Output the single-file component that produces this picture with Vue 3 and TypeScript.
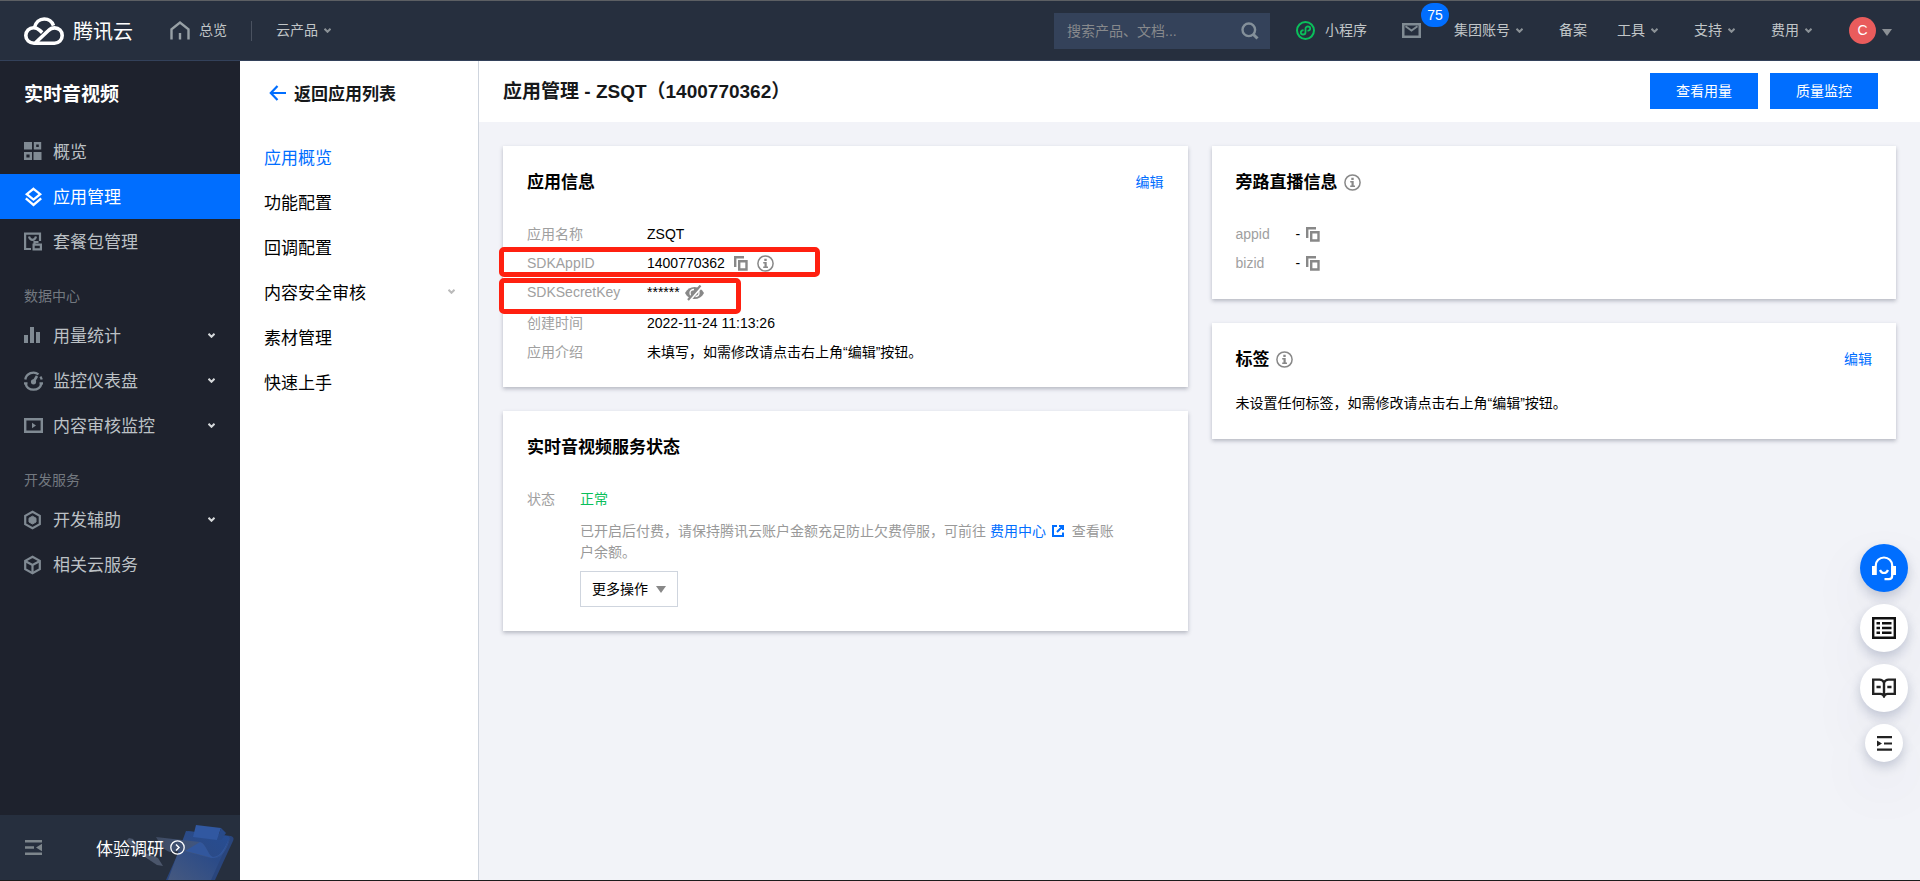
<script setup lang="ts">
import { ref } from 'vue'

interface SideItem {
  label: string
  icon: string
  active?: boolean
  expandable?: boolean
}
interface SideSection {
  title?: string
  items: SideItem[]
}

const keyword = ref<string>('')

const accountMenus: { label: string; arrow: boolean }[] = [
  { label: '集团账号', arrow: true },
  { label: '备案', arrow: false },
  { label: '工具', arrow: true },
  { label: '支持', arrow: true },
  { label: '费用', arrow: true },
]

const sections: SideSection[] = [
  {
    items: [
      { label: '概览', icon: 'grid' },
      { label: '应用管理', icon: 'layers', active: true },
      { label: '套餐包管理', icon: 'package' },
    ],
  },
  {
    title: '数据中心',
    items: [
      { label: '用量统计', icon: 'bars', expandable: true },
      { label: '监控仪表盘', icon: 'gauge', expandable: true },
      { label: '内容审核监控', icon: 'play', expandable: true },
    ],
  },
  {
    title: '开发服务',
    items: [
      { label: '开发辅助', icon: 'hexagon', expandable: true },
      { label: '相关云服务', icon: 'cube' },
    ],
  },
]

const subItems: { label: string; active?: boolean; expandable?: boolean }[] = [
  { label: '应用概览', active: true },
  { label: '功能配置' },
  { label: '回调配置' },
  { label: '内容安全审核', expandable: true },
  { label: '素材管理' },
  { label: '快速上手' },
]
</script>

<template>
  <div class="app">
    <header class="topbar">
      <a class="brand" href="#">
        <svg width="40" height="28" viewBox="0 0 40 28" fill="none" stroke="#fff" stroke-width="3.6" stroke-linejoin="round">
          <path d="M10.5 10.6C11.6 5.6 15.4 2 20.2 2c4.300 0 7.800 2.600 9.300 6.600" />
          <path d="M10 26.200c-4.600 0-8.200-3.300-8.200-7.600 0-4.400 3.400-7.800 7.700-7.800 2.600 0 4.400.9 6.300 2.600l2.400 2.200" />
          <path d="M10 26.200h20.500c4.300 0 7.700-3.200 7.700-7.700 0-4.300-3.300-7.600-7.500-7.600-2.600 0-4.600 1-6.500 2.900L11.500 25.800" />
        </svg>
        <span class="brand-name">腾讯云</span>
      </a>
      <a class="top-link home" href="#">
        <svg width="20" height="19" viewBox="0 0 20 19" fill="none" stroke="#97a0a5" stroke-width="2.4">
          <path d="M1.500 18.500V8.400L10 1.600l8.500 6.800v10.100M10 18.500v-6.500" />
        </svg>
        <span>总览</span>
      </a>
      <span class="divider"></span>
      <a class="top-link" href="#">
        <span>云产品</span>
        <svg class="chev" width="7" height="5" viewBox="0 0 7 5"><path d="M.5.8l3 3 3-3" /></svg>
      </a>

      <form class="search" role="search" @submit.prevent>
        <input v-model="keyword" type="text" aria-label="搜索产品、文档" placeholder="搜索产品、文档..." />
        <button type="submit" aria-label="搜索">
          <svg width="18" height="18" viewBox="0 0 18 18" fill="none" stroke="#84909a" stroke-width="2.400">
            <circle cx="7.800" cy="7.800" r="6.300" /><path d="M12.200 12.200l4.300 4.300" stroke-width="3" />
          </svg>
        </button>
      </form>
      <a class="top-link mini" href="#">
        <svg width="19" height="19" viewBox="0 0 19 19" fill="none" stroke="#0abf5b">
          <circle cx="9.500" cy="9.500" r="8.500" stroke-width="2" />
          <path d="M7.600 9.200C5.800 9.400 4.800 10.300 4.800 11.500c0 1.200 1 2 2.200 2 1.500 0 2.500-.9 2.500-2.300V7.800c0-1.400 1-2.300 2.400-2.300 1.300 0 2.300.8 2.300 2 0 1.200-1 2.100-2.700 2.300" stroke-width="1.800" />
        </svg>
        <span>小程序</span>
      </a>
      <a class="mail" href="#" aria-label="消息">
        <svg width="19" height="15" viewBox="0 0 19 15" fill="none" stroke="#808b93" stroke-width="2.600">
          <rect x="1.200" y="1.200" width="16.600" height="12.600" /><path d="M3.500 3.300l6 4.200 6-4.200" stroke-width="2" />
        </svg>
        <span class="badge">75</span>
      </a>
      <nav class="menus" aria-label="账号菜单">
        <a v-for="m in accountMenus" :key="m.label" class="top-link" :class="{ plain: !m.arrow }" href="#">
          <span>{{ m.label }}</span>
          <svg v-if="m.arrow" class="chev" width="7" height="5" viewBox="0 0 7 5"><path d="M.5.8l3 3 3-3" /></svg>
        </a>
      </nav>
      <button class="user" type="button">
        <span class="avatar">C</span>
        <svg class="user-caret" width="10" height="7" viewBox="0 0 10 7" fill="#8b9095"><path d="M0 0h10L5 7z" /></svg>
      </button>
    </header>

    <div class="body">
      <aside class="sidebar">
        <h2 class="side-title">实时音视频</h2>
        <nav aria-label="产品导航">
          <template v-for="(s, i) in sections" :key="i">
            <div v-if="s.title" class="side-label">{{ s.title }}</div>
            <a v-for="it in s.items" :key="it.label" class="side-item" :class="{ active: it.active }" href="#">
              <svg v-if="it.icon === 'grid'" width="19" height="19" viewBox="0 0 19 19" fill="none" stroke="#808a93" stroke-width="2.400">
                <path d="M0 0h8v7.500H0zM9.500 10h8v8h-8z" fill="#808a93" stroke="none" />
                <path d="M11 1.200h5v5h-5zM1.200 11.200h5.600v5.600H1.200z" />
              </svg>
              <svg v-else-if="it.icon === 'layers'" width="19" height="20" viewBox="0 0 19 20" fill="none" stroke="#fff" stroke-width="2.300">
                <path d="M9.500 1.800l6.700 5.400-6.700 5.400-6.700-5.400z" /><path d="M1.800 11.400l7.700 6.500 7.700-6.500" />
              </svg>
              <svg v-else-if="it.icon === 'package'" width="19" height="19" viewBox="0 0 19 19" fill="none" stroke="#808a93" stroke-width="2.200">
                <path d="M16 9V1.600H1.100v15.400H7" /><path d="M5 4.500c.5 2.200 1.800 3.300 3.500 3.300S11.500 6.700 12 4.500" /><path d="M9.600 12.600h7.300v4.800H9.600zM10.500 12v-2h4" />
              </svg>
              <svg v-else-if="it.icon === 'bars'" width="19" height="18" viewBox="0 0 19 18" fill="#808a93">
                <path d="M0 8h4v8H0zM6 0h4v16H6zM12 5h4v11h-4z" />
              </svg>
              <svg v-else-if="it.icon === 'gauge'" width="19" height="20" viewBox="0 0 19 20" fill="none" stroke="#808a93" stroke-width="2.300">
                <path d="M1.300 8.500A8.300 8.300 0 0 1 14.500 3.300M16.400 5.600a8.300 8.300 0 0 1 1.300 3M1.500 12.600a8.300 8.300 0 0 0 16 0M0 12.300h3.500M15.500 12.300H19" />
                <circle cx="9.500" cy="10.800" r="2.600" fill="#808a93" stroke="none" /><path d="M9.700 10.500L13 5" stroke-width="2.600" />
              </svg>
              <svg v-else-if="it.icon === 'play'" width="19" height="15" viewBox="0 0 19 15" fill="none" stroke="#808a93" stroke-width="2.400">
                <path d="M1.200 1.200h16.600v12.600H1.200z" /><path d="M8 4.800l4 2.700-4 2.700z" fill="#808a93" stroke="none" />
              </svg>
              <svg v-else-if="it.icon === 'hexagon'" width="19" height="20" viewBox="0 0 19 20" fill="none" stroke="#808a93" stroke-width="2.200">
                <path d="M8.500 1.800l7.300 4.100v8.200l-7.300 4.100-7.300-4.100V5.900z" /><path d="M8.500 6.200l3.500 2v3.800l-3.500 2-3.500-2V8.200z" fill="#808a93" stroke-width="1" />
              </svg>
              <svg v-else width="19" height="20" viewBox="0 0 19 20" fill="none" stroke="#808a93" stroke-width="2.200">
                <path d="M8.500 1.800l7.300 4.100v8.200l-7.300 4.100-7.300-4.100V5.900z" /><path d="M1.500 6.200l7 3.800 7-3.800M8.500 10v8" />
              </svg>
              <span class="grow">{{ it.label }}</span>
              <svg v-if="it.expandable" class="side-chev" width="7" height="5" viewBox="0 0 7 5"><path d="M.5.8l3 3 3-3" /></svg>
            </a>
          </template>
        </nav>
        <div class="side-foot">
          <button class="collapse" type="button" aria-label="收起导航">
            <svg width="17" height="15" viewBox="0 0 17 15" fill="#7d868c">
              <path d="M0 0h17v2.400H0zM0 6.300h9v2.400H0zM0 12.600h17V15H0zM17 3.700v7.600l-6-3.800z" />
            </svg>
          </button>
          <svg class="clipboard" width="110" height="55" viewBox="0 0 110 55">
            <defs>
              <linearGradient id="board" x1="0" y1="1" x2="1" y2="0">
                <stop offset="0" stop-color="#46597f" /><stop offset=".6" stop-color="#2b4b88" /><stop offset="1" stop-color="#264d94" />
              </linearGradient>
              <linearGradient id="sheet" x1="0" y1="0" x2="1" y2="0">
                <stop offset="0" stop-color="#3f4b61" /><stop offset=".5" stop-color="#41557c" /><stop offset="1" stop-color="#2f5296" />
              </linearGradient>
            </defs>
            <path d="M0 16l3-3 4 1 6 9 6 5 13 5 5 8-6-1-15-10-8-7z" fill="#4b566b" />
            <path d="M62 6l43 5c3 1 3 3 2 5L89 55H40z" fill="#29457c" />
            <path d="M60 6l42 5c2 1 2 3 1 4L85 55H42z" fill="url(#board)" />
            <path d="M30 12l17 2 27 3c6 1 8 14 13 16 8 0 13-10 17-20-3 12-9 21-17 20-13-1-24-9-43-6-7-2-10-8-14-15z" fill="url(#sheet)" />
            <path d="M74 17c6 1 8 14 13 15 7 0 12-9 16-19-4 14-9 20-17 20-8-2-17-5-27-7z" fill="#32579d" />
            <path d="M70 0l25 3-4 12-24-3z" fill="#3158a1" /><path d="M95 3l5 5-5 7h-4z" fill="#284a89" />
          </svg>
          <a class="survey" href="#">
            <span>体验调研</span>
            <svg width="15" height="15" viewBox="0 0 15 15" fill="none" stroke="#fff">
              <circle cx="7.500" cy="7.500" r="6.700" stroke-width="1.300" /><path d="M6 4.500l3 3-3 3" stroke-width="1.500" />
            </svg>
          </a>
        </div>
      </aside>

      <aside class="subnav">
        <a class="back" href="#">
          <svg width="17" height="16" viewBox="0 0 17 16" fill="none" stroke="#006eff" stroke-width="2.200">
            <path d="M8.500 1L1.800 8l6.700 7M1.800 8H17" />
          </svg>
          <span>返回应用列表</span>
        </a>
        <nav aria-label="应用导航">
          <a v-for="it in subItems" :key="it.label" class="sub-item" :class="{ active: it.active }" href="#">
            <span>{{ it.label }}</span>
            <svg v-if="it.expandable" class="sub-chev" width="7" height="5" viewBox="0 0 7 5"><path d="M.5.8l3 3 3-3" /></svg>
          </a>
        </nav>
      </aside>

      <main class="main">
        <div class="page-head">
          <h1>应用管理 - ZSQT（1400770362）</h1>
          <div class="actions">
            <button class="primary" type="button">查看用量</button>
            <button class="primary" type="button">质量监控</button>
          </div>
        </div>

        <div class="columns">
          <div class="column">
            <section class="card">
              <div class="card-head">
                <h3>应用信息</h3>
                <a href="#">编辑</a>
              </div>
              <dl class="info">
                <div class="row"><dt>应用名称</dt><dd>ZSQT</dd></div>
                <div class="row marked marked-id">
                  <dt>SDKAppID</dt>
                  <dd>
                    1400770362
                    <button class="icon-btn" type="button" aria-label="复制">
                      <svg class="copy" width="14" height="15" viewBox="0 0 14 15"><path d="M10 1.200H1.200V11" /><path d="M5.200 5.200h7.300v8.300H5.200z" /></svg>
                    </button>
                    <svg class="tip" width="17" height="17" viewBox="0 0 17 17"><circle cx="8.500" cy="8.500" r="7.600" /><path d="M7.300 3.700h2.400v2.200H7.300zM6.200 7.100h3.500v4.400H11V13H6.200v-1.500h1.300V8.500H6.200z" /></svg>
                  </dd>
                </div>
                <div class="row marked marked-key">
                  <dt>SDKSecretKey</dt>
                  <dd class="secret">
                    ******
                    <button class="icon-btn" type="button" aria-label="显示密钥">
                      <svg width="19" height="16" viewBox="0 0 19 16">
                        <path d="M0 8c2-4 5.500-6 9.500-6S17 4 19 8c-2 4-5.500 6-9.500 6S2 12 0 8z" fill="#888" />
                        <path d="M9 4.500C6.500 4.500 5 6 5 8s.8 2.500 1.500 3M10.500 11.500C12.800 11.300 14 10 14 8s-.6-2.300-1-2.800" fill="none" stroke="#fff" stroke-width="1.300" />
                        <path d="M4.300 16L17 1.500" stroke="#fff" stroke-width="2" /><path d="M3 15L15.500.5" stroke="#888" stroke-width="2.200" />
                      </svg>
                    </button>
                  </dd>
                </div>
                <div class="row"><dt>创建时间</dt><dd>2022-11-24 11:13:26</dd></div>
                <div class="row"><dt>应用介绍</dt><dd>未填写，如需修改请点击右上角“编辑”按钮。</dd></div>
              </dl>
            </section>

            <section class="card status-card">
              <div class="card-head"><h3>实时音视频服务状态</h3></div>
              <div class="status">
                <span class="status-label">状态</span>
                <div class="status-body">
                  <div class="ok">正常</div>
                  <p>
                    已开启后付费，请保持腾讯云账户金额充足防止欠费停服，可前往
                    <a href="#">费用中心<svg class="ext" width="12" height="12" viewBox="0 0 12 12" fill="none" stroke="#006eff" stroke-width="2"><path d="M5 1H1v10h10V7.500M7 1h4v4M11 1L5 7" /></svg></a>
                    查看账户余额。
                  </p>
                  <button class="more" type="button" aria-haspopup="menu">
                    <span>更多操作</span>
                    <svg width="10" height="7" viewBox="0 0 10 7" fill="#888"><path d="M0 0h10L5 7z" /></svg>
                  </button>
                </div>
              </div>
            </section>
          </div>

          <div class="column">
            <section class="card">
              <div class="card-head">
                <h3>旁路直播信息</h3>
                <svg class="tip" width="17" height="17" viewBox="0 0 17 17"><circle cx="8.500" cy="8.500" r="7.600" /><path d="M7.300 3.700h2.400v2.200H7.300zM6.200 7.100h3.500v4.400H11V13H6.200v-1.500h1.300V8.500H6.200z" /></svg>
              </div>
              <dl class="info short">
                <div v-for="k in ['appid', 'bizid']" :key="k" class="row">
                  <dt>{{ k }}</dt>
                  <dd>
                    -
                    <button class="icon-btn" type="button" aria-label="复制">
                      <svg class="copy" width="14" height="15" viewBox="0 0 14 15"><path d="M10 1.200H1.200V11" /><path d="M5.200 5.200h7.300v8.300H5.200z" /></svg>
                    </button>
                  </dd>
                </div>
              </dl>
            </section>

            <section class="card">
              <div class="card-head">
                <h3>标签</h3>
                <svg class="tip" width="17" height="17" viewBox="0 0 17 17"><circle cx="8.500" cy="8.500" r="7.600" /><path d="M7.300 3.700h2.400v2.200H7.300zM6.200 7.100h3.500v4.400H11V13H6.200v-1.500h1.300V8.500H6.200z" /></svg>
                <a href="#">编辑</a>
              </div>
              <p class="tag-empty">未设置任何标签，如需修改请点击右上角“编辑”按钮。</p>
            </section>
          </div>
        </div>
      </main>
    </div>

    <div class="floaters">
      <button class="blue" type="button" aria-label="在线客服">
        <svg width="24" height="25" viewBox="0 0 24 25" fill="none" stroke="#fff" stroke-width="2.200">
          <path d="M3.800 10V9.500C3.800 4.800 7.500 1.500 12 1.500s8.200 3.300 8.200 8v10c0 2.400-1 3.700-3.200 3.700h-4.500" />
          <path d="M0 10h4.800v9H0zM19.200 10H24v9h-4.800z" fill="#fff" stroke="none" /><path d="M8 14c.8 2 2.200 3 4 3s3.200-1 4-3" />
        </svg>
      </button>
      <button type="button" aria-label="文档列表">
        <svg width="24" height="22" viewBox="0 0 24 22" fill="none" stroke="#111" stroke-width="2.400">
          <path d="M1.200 1.200h21.600v19.600H1.200zM4.500 6.200H8M10 6.200h9.500M4.500 11H8M10 11h9.500M4.500 15.800H8M10 15.800h9.500" />
        </svg>
      </button>
      <button type="button" aria-label="帮助手册">
        <svg width="24" height="20" viewBox="0 0 24 20" fill="none" stroke="#222" stroke-width="2.400">
          <path d="M12 4.500C11 2.500 9.500 1.600 7.500 1.600H1.200v14.300h7.300c1.800 0 2.800.8 3.500 2.300.7-1.500 1.700-2.300 3.500-2.300h7.300V1.600h-6.300c-2 0-3.500.9-4.500 2.900zM12 4v14M4.500 9h4.200M15.300 9h4.200" />
        </svg>
      </button>
      <button class="small" type="button" aria-label="收起工具">
        <svg width="15" height="15" viewBox="0 0 15 15" fill="#222">
          <path d="M0 0h15v2.200H0zM7 6.400h8v2.200H7zM0 12.600h15v2.200H0zM0 4.500v6l5-3z" />
        </svg>
      </button>
    </div>
  </div>
</template>

<style>
body {
  margin: 0;
  background: #f2f3f8;
}
</style>

<style scoped>
.app {
  display: flex;
  flex-direction: column;
  box-sizing: border-box;
  min-height: 100vh;
  border-bottom: 1px solid #1c1c1c;
  font-family: "Liberation Sans", "Noto Sans CJK SC", sans-serif;
  font-size: 14px;
  color: #000;
}
a {
  color: #006eff;
  text-decoration: none;
}
svg {
  flex: none;
}
button {
  font: inherit;
  padding: 0;
  border: 0;
  background: none;
  cursor: pointer;
}
h1,
h2,
h3,
p,
dl,
dd {
  margin: 0;
}

.topbar {
  display: flex;
  align-items: center;
  box-sizing: border-box;
  height: 61px;
  padding: 0 28px 0 24px;
  border-top: 1px solid #5c5f63;
  border-bottom: 1px solid #33415a;
  background: #262f3e;
}
.brand {
  display: flex;
  align-items: center;
  gap: 9px;
  margin-right: 37px;
  color: #fff;
}
.brand-name {
  font-size: 20px;
}
.top-link {
  display: flex;
  align-items: center;
  gap: 6px;
  color: #c1c6c8;
  white-space: nowrap;
}
.top-link span {
  padding-bottom: 4px;
}
.home {
  gap: 9px;
}
.chev {
  fill: none;
  stroke: #8b9297;
  stroke-width: 2;
}
.divider {
  width: 1px;
  height: 20px;
  margin: 0 24px;
  background: #4a5260;
}
.search {
  display: flex;
  align-items: center;
  box-sizing: border-box;
  width: 216px;
  height: 36px;
  margin: 0 26px 0 auto;
  padding: 0 11px 0 13px;
  background: #34425a;
}
.search input {
  flex: 1;
  min-width: 0;
  padding: 0;
  border: 0;
  outline: 0;
  background: none;
  font: inherit;
  color: #fff;
}
.search input::placeholder {
  color: #87898c;
  opacity: 1;
}
.search button {
  display: flex;
}
.mini {
  gap: 10px;
}
.mail {
  position: relative;
  display: flex;
  margin: 0 33px 0 35px;
}
.badge {
  position: absolute;
  left: 19px;
  bottom: 11px;
  width: 28px;
  border-radius: 12px;
  background: #006eff;
  color: #fff;
  line-height: 24px;
  text-align: center;
}
.menus {
  display: flex;
  gap: 36px;
}
.menus .plain {
  margin-right: -6px;
}
.user {
  display: flex;
  align-items: center;
  gap: 6px;
  margin-left: 37px;
}
.user-caret {
  margin-top: 4px;
}
.avatar {
  width: 27px;
  border-radius: 50%;
  background: #e95c5c;
  color: #fff;
  line-height: 27px;
  text-align: center;
}

.body {
  display: flex;
  flex: 1;
}
.sidebar {
  display: flex;
  flex: none;
  flex-direction: column;
  width: 240px;
  background: #1e222d;
}
.side-title {
  padding: 20px 24px;
  color: #fff;
  font-size: 19px;
  line-height: 28px;
}
.side-label {
  margin: 20px 24px 5px;
  color: #737980;
  line-height: 24px;
}
.side-item {
  display: flex;
  align-items: center;
  gap: 10px;
  height: 45px;
  padding: 0 25px 0 24px;
  color: #bcc1c5;
  font-size: 17px;
}
.side-item.active {
  background: #006eff;
  color: #fff;
}
.grow {
  flex: 1;
  padding-bottom: 3px;
}
.side-chev {
  fill: none;
  stroke: #d5d8da;
  stroke-width: 2;
}
.side-foot {
  position: relative;
  display: flex;
  align-items: center;
  height: 65px;
  margin-top: auto;
  padding-left: 25px;
  background: #262f3e;
}
.collapse {
  display: flex;
}
.clipboard {
  position: absolute;
  right: 4px;
  bottom: 0;
}
.survey {
  position: relative;
  display: flex;
  align-items: center;
  gap: 6px;
  margin-left: 54px;
  color: #fff;
  font-size: 17px;
}

.subnav {
  flex: none;
  width: 238px;
  border-right: 1px solid #cfd5de;
  background: #fff;
}
.back {
  display: flex;
  align-items: center;
  gap: 8px;
  height: 64px;
  margin-bottom: 9px;
  padding-left: 29px;
  color: #16181a;
  font-size: 17px;
  font-weight: 700;
}
.back span {
  padding-bottom: 2px;
}
.sub-item {
  display: flex;
  align-items: center;
  justify-content: space-between;
  height: 45px;
  padding: 0 23px 0 24px;
  color: #000;
  font-size: 17px;
}
.sub-item.active {
  color: #006eff;
}
.sub-chev {
  fill: none;
  stroke: #bbb;
  stroke-width: 2;
}

.main {
  flex: 1;
  min-width: 0;
  background: #f2f3f8;
}
.page-head {
  display: flex;
  align-items: center;
  justify-content: space-between;
  box-sizing: border-box;
  height: 61px;
  padding: 0 42px 1px 24px;
  background: #fff;
}
.page-head h1 {
  padding-bottom: 4px;
  color: #16181a;
  font-size: 19px;
}
.actions {
  display: flex;
  gap: 12px;
}
.primary {
  width: 108px;
  height: 36px;
  padding-bottom: 3px;
  background: #006eff;
  color: #fff;
}
.columns {
  display: grid;
  grid-template-columns: 1fr 1fr;
  gap: 24px;
  padding: 24px;
}
.column {
  display: flex;
  flex-direction: column;
  gap: 24px;
}
.card {
  padding: 24px 24px 20px;
  background: #fff;
  box-shadow: 0 2px 4px rgba(54, 58, 80, 0.32);
}
.card-head {
  display: flex;
  align-items: center;
  gap: 6px;
  height: 24px;
  line-height: 24px;
}
.card-head h3 {
  padding-top: 2px;
  font-size: 17px;
}
.card-head a {
  margin-left: auto;
}
.tip circle {
  fill: none;
  stroke: #888;
  stroke-width: 1.5;
}
.tip path {
  fill: #888;
}
.copy path {
  fill: none;
  stroke: #888;
  stroke-width: 2.4;
}
.info {
  margin-top: 26px;
}
.row {
  position: relative;
  display: flex;
  line-height: 29px;
}
.row dt {
  width: 120px;
  color: #a0a0a0;
}
.row dd {
  display: flex;
  align-items: center;
  gap: 9px;
}
.info.short {
  padding-bottom: 1px;
}
.short dt {
  width: 60px;
}
.short dd {
  gap: 6px;
}
.icon-btn {
  display: flex;
}
.row .secret {
  gap: 5px;
}
.marked-key {
  margin-bottom: 2px;
}
/* Callout frames around the two credentials */
.marked::after {
  content: "";
  position: absolute;
  left: -28px;
  box-sizing: border-box;
  border: 5px solid #ff2010;
  border-radius: 5px;
  pointer-events: none;
}
.marked-id::after {
  top: -2px;
  width: 321px;
  height: 30px;
}
.marked-key::after {
  top: 0;
  width: 242px;
  height: 36px;
}
.status-card {
  padding-bottom: 24px;
}
.status {
  display: flex;
  margin-top: 26px;
}
.status-label {
  width: 53px;
  color: #a0a0a0;
  line-height: 28px;
}
.status-body {
  flex: 1;
  max-width: 546px;
}
.ok {
  color: #0abf5b;
  line-height: 28px;
}
.status p {
  margin: 8px 0;
  color: #999;
  line-height: 21px;
}
.ext {
  margin: 0 4px 0 6px;
  vertical-align: -1px;
}
.more {
  display: flex;
  align-items: center;
  justify-content: center;
  gap: 8px;
  width: 98px;
  height: 36px;
  border: 1px solid #cfd5de;
  background: #fff;
  color: #000;
}
.more span {
  padding-bottom: 2px;
}
.tag-empty {
  margin: 20px 0 4px;
  line-height: 24px;
}

.floaters {
  position: fixed;
  right: 12px;
  bottom: 119px;
  display: flex;
  flex-direction: column;
  align-items: center;
  gap: 12px;
}
.floaters button {
  display: flex;
  align-items: center;
  justify-content: center;
  width: 48px;
  height: 48px;
  border-radius: 50%;
  background: #fff;
  box-shadow: 0 5px 12px rgba(54, 70, 110, 0.25), 0 24px 60px rgba(54, 70, 110, 0.08);
}
.floaters .blue {
  background: #006eff;
}
.floaters .small {
  width: 38px;
  height: 38px;
}
</style>
